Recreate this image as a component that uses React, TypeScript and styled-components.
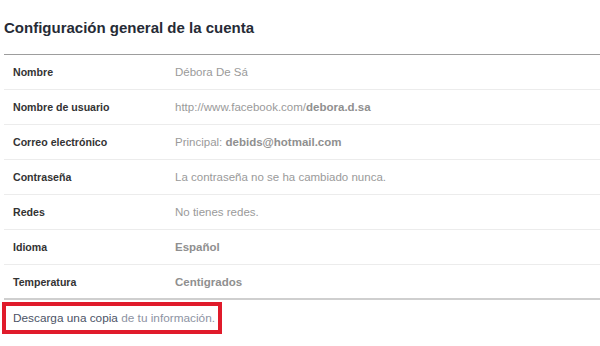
import styled, { createGlobalStyle } from "styled-components";

const GlobalStyle = createGlobalStyle`
  html, body {
    margin: 0;
    padding: 0;
    background: #ffffff;
  }
  body {
    font-family: "Liberation Sans", Arial, sans-serif;
  }
`;

type Part = { text: string; strong?: boolean };

const settings: { label: string; value: Part[] }[] = [
  { label: "Nombre", value: [{ text: "Débora De Sá" }] },
  {
    label: "Nombre de usuario",
    value: [{ text: "http://www.facebook.com/" }, { text: "debora.d.sa", strong: true }],
  },
  {
    label: "Correo electrónico",
    value: [{ text: "Principal: " }, { text: "debids@hotmail.com", strong: true }],
  },
  { label: "Contraseña", value: [{ text: "La contraseña no se ha cambiado nunca." }] },
  { label: "Redes", value: [{ text: "No tienes redes." }] },
  { label: "Idioma", value: [{ text: "Español", strong: true }] },
  { label: "Temperatura", value: [{ text: "Centigrados", strong: true }] },
];

function App() {
  return (
    <Page>
      <GlobalStyle />
      <Header>
        <Title>Configuración general de la cuenta</Title>
      </Header>
      <Table>
        {settings.map((row, i) => (
          <Row key={row.label} $last={i === settings.length - 1}>
            <Label>{row.label}</Label>
            <Value>
              {row.value.map((part, j) =>
                part.strong ? <Strong key={j}>{part.text}</Strong> : <span key={j}>{part.text}</span>
              )}
            </Value>
          </Row>
        ))}
      </Table>
      <Footer>
        <DownloadBox>
          <DownloadLink>Descarga una copia</DownloadLink>
          <Muted> de tu información.</Muted>
        </DownloadBox>
      </Footer>
    </Page>
  );
}

const Page = styled.div`
  width: 600px;
  height: 346px;
  overflow: hidden;
  padding-left: 4px;
  box-sizing: border-box;
`;

const Header = styled.div`
  height: 55px;
  display: flex;
  align-items: center;
  border-bottom: 1px solid #9d9d9d;
  box-sizing: border-box;
`;

const Title = styled.h2`
  margin: 0;
  font-size: 15px;
  font-weight: 700;
  color: #262b36;
`;

const Table = styled.div`
  display: flex;
  flex-direction: column;
`;

const Row = styled.div<{ $last?: boolean }>`
  display: grid;
  grid-template-columns: 162px 1fr;
  align-items: center;
  height: 35px;
  padding-left: 9px;
  box-sizing: border-box;
  border-bottom: ${({ $last }) => ($last ? "2px solid #cfcfcf" : "1px solid #ececec")};
`;

const Label = styled.div`
  font-size: 10.6px;
  font-weight: 700;
  color: #333333;
`;

const Value = styled.div`
  font-size: 11.5px;
  color: #9a9a9a;
`;

const Strong = styled.span`
  font-weight: 700;
  color: #8f8f8f;
`;

const Footer = styled.div`
  padding-top: 2px;
`;

const DownloadBox = styled.div`
  width: 220px;
  height: 32px;
  margin-left: -2px;
  box-sizing: border-box;
  border: 4px solid #e01b2b;
  display: flex;
  align-items: center;
  padding-left: 7px;
  font-size: 11.8px;
`;

const DownloadLink = styled.span`
  color: #4b5366;
  white-space: pre;
`;

const Muted = styled.span`
  color: #8d93a3;
  white-space: pre;
`;

export default App;
